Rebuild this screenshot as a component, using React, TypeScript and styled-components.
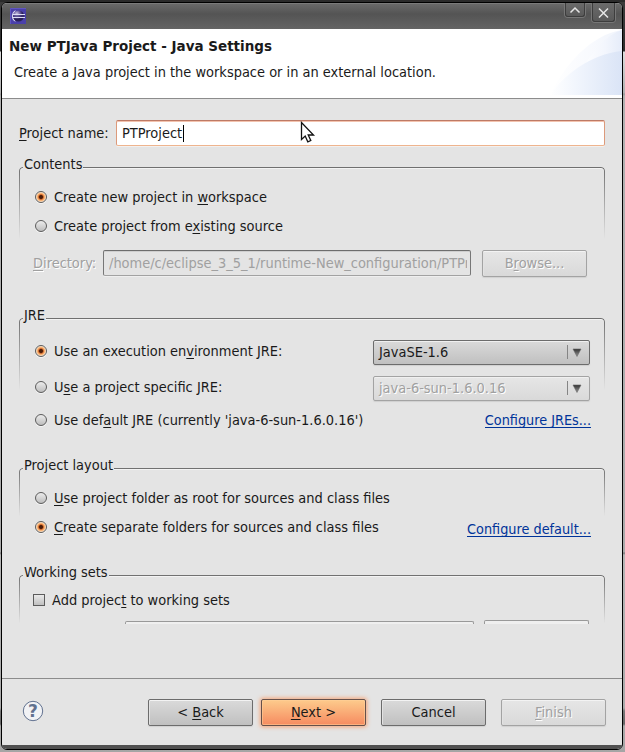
import React from "react";
import styled, { createGlobalStyle, css } from "styled-components";

const FACE = "#e4e4e4";

const GlobalStyle = createGlobalStyle`
  * { box-sizing: border-box; }
  body {
    margin: 0;
    overflow: hidden;
    font-family: "DejaVu Sans Condensed", "DejaVu Sans", sans-serif;
    font-stretch: condensed;
    font-size: 14.45px;
    line-height: 20px;
    color: #1a1a1a;
    white-space: nowrap;
  }
`;

const Desktop = styled.div`
  width: 625px;
  height: 752px;
  padding: 2px 2px 2px 1px;
  background: linear-gradient(#2b2b2b 0 2px, #3c3c3c 2px, #2e2e2e 51px, #dcdcdc 52px, #b0b0b0 93px, #999 94px, #b1b1b1 96px, #aaa 552px, #777 553px, #b5b5b5 555px, #aaa 708px, #777 711px, #666 724px, #aaa 726px, #a5a5a5);
`;

const Window = styled.div`
  display: flex;
  flex-direction: column;
  width: 622px;
  height: 748px;
  border: 1px solid #000;
  border-radius: 6px;
  background: ${FACE};
  overflow: hidden;
`;

const TitleBar = styled.div`
  display: flex;
  flex: none;
  height: 26px;
  padding: 0 7px 0 8px;
  background: linear-gradient(#7b7b7b 0 1px, #696969 1px, #545454 11px, #646464);
`;

const AppIcon = styled.svg`
  width: 16px;
  height: 16px;
  margin: 5px auto 0 0;
`;

const WindowButton = styled.div<{ $w: number; $h: number }>`
  width: ${(p) => p.$w}px;
  height: ${(p) => p.$h}px;
  margin-left: 7px;
  border: 1px solid #3d3d3d;
  border-top: 0;
  border-radius: 0 0 3px 3px;
  box-shadow: 0 0 0 1px #777;
  background: linear-gradient(#6b6b6b, #595959);
  svg { display: block; }
`;

const Banner = styled.header`
  display: flex;
  flex: none;
  justify-content: space-between;
  height: 70px;
  border-bottom: 1px solid #8c8c8c;
  background: #fff;
`;

const BannerText = styled.div`
  padding: 7px 0 0 7px;
`;

const Title = styled.h1`
  margin: 0;
  font-family: "DejaVu Sans", sans-serif;
  font-stretch: normal;
  font-size: 13.5px;
  line-height: 20px;
  font-weight: bold;
`;

const Subtitle = styled.p`
  margin: 6px 0 0 5px;
`;

const Form = styled.main`
  flex: none;
  height: 579px;
  padding: 21px 17px 0;
`;

const Row = styled.div<{ $top?: number; $left?: number; $h?: number }>`
  display: flex;
  align-items: center;
  height: ${(p) => p.$h ?? 20}px;
  margin-top: ${(p) => p.$top ?? 0}px;
  padding-left: ${(p) => p.$left ?? 0}px;
`;

const Key = styled.span`
  text-decoration: underline 1px;
  text-underline-offset: 2px;
  text-decoration-skip-ink: none;
`;

const Label = styled.label<{ $w?: number; $disabled?: boolean }>`
  width: ${(p) => (p.$w ? `${p.$w}px` : "auto")};
  height: 20px;
  ${(p) => p.$disabled && css`color: #a0a0a0; text-shadow: 1px 1px 0 #fff;`}
`;

const Field = styled.div<{ $w: number; $disabled?: boolean }>`
  width: ${(p) => p.$w}px;
  height: 26px;
  padding: 2px 3px 2px 5px;
  border: 1px solid;
  border-radius: 2px;
  ${(p) =>
    p.$disabled
      ? css`
          border-color: #6e6e6e #777 #a2a2a2 #777;
          color: #a0a0a0;
          background: ${FACE};
          box-shadow: inset 0 1px 0 #cfcfcf, 0 1px 0 #efefef;
        `
      : css`
          border-color: #bd7a66 #dc9a7b #eeb48e #dc9a7b;
          background: #fff;
          box-shadow: inset 0 1px 0 #f3c3ae, 0 1px 0 #f3f0ee;
        `}
`;

const Clip = styled.div`
  overflow: hidden;
  height: 20px;
`;

const Caret = styled.span`
  display: inline-block;
  width: 1px;
  height: 17px;
  margin: 2px 0 0 1px;
  background: #000;
  vertical-align: top;
`;

const Group = styled.section<{ $h: number; $fade: number }>`
  position: relative;
  height: ${(p) => p.$h}px;
  &::before {
    content: "";
    position: absolute;
    inset: 0 0 auto;
    height: ${(p) => p.$fade}px;
    border: 1px solid #6f6f6f;
    border-bottom: 0;
    border-radius: 4px 4px 0 0;
    box-shadow: inset 0 1px 0 #f3f3f3;
    mask-image: linear-gradient(#000, transparent);
    pointer-events: none;
  }
`;

const Legend = styled.div`
  position: relative;
  width: fit-content;
  height: 20px;
  margin: 0 0 -13px 4px;
  padding: 0 1px;
  top: -13px;
  background: ${FACE};
`;

const Radio = styled.span<{ $on?: boolean }>`
  width: 12px;
  height: 12px;
  margin: 0 7px 0 16px;
  border: 1px solid #5c5c5c;
  border-radius: 50%;
  box-shadow: 0 1px 0 #f5f5f5;
  background: ${(p) =>
    p.$on
      ? "radial-gradient(circle at 50% 50%, #4b1c08 0 1.5px, #c8622c 2.4px, #f9a860 3.2px, #fbc796 4.2px, #fdf0e4 5px)"
      : "linear-gradient(#ececec, #bdbdbd)"};
`;

const Checkbox = styled.span`
  width: 12px;
  height: 12px;
  margin: 0 7px 0 14px;
  border: 1px solid #5c5c5c;
  background: linear-gradient(#eaeaea, #c0c0c0);
`;

const Button = styled.button<{ $kind?: "primary" | "disabled"; $gap?: number }>`
  flex: none;
  width: 105px;
  height: 27px;
  margin: 1px 0 0 ${(p) => p.$gap ?? 15}px;
  padding: 0 0 1px;
  border: 1px solid #6c6c6c;
  border-radius: 2px;
  font: inherit;
  color: #1a1a1a;
  background: linear-gradient(#dadada, #c0c0c0);
  box-shadow: inset 0 1px 0 #f3f3f3, inset 1px 0 0 #e2e2e2, 0 1px 1px #d0d0d0;
  ${(p) =>
    p.$kind === "primary" &&
    css`
      border-color: #65504a;
      background: linear-gradient(#fdcb8c, #f68b60);
      box-shadow: inset 0 0 0 1px #ffd09a88, 0 0 4px 1px #f6a476;
    `}
  ${(p) =>
    p.$kind === "disabled" &&
    css`
      border-color: #a3a3a3;
      color: #a0a0a0;
      text-shadow: 1px 1px 0 #fff;
      background: linear-gradient(#e6e6e6, #d9d9d9);
    `}
`;

const Select = styled.div<{ $disabled?: boolean }>`
  display: flex;
  align-items: center;
  justify-content: space-between;
  width: 217px;
  height: 25px;
  margin: 2px 15px 0 auto;
  padding: 0 7px 0 5px;
  border: 1px solid #6c6c6c;
  border-radius: 2px;
  background: linear-gradient(#dadada, #c0c0c0);
  box-shadow: inset 0 1px 0 #f0f0f0, 0 1px 1px #cfcfcf;
  ${(p) =>
    p.$disabled &&
    css`
      border-color: #a3a3a3;
      color: #a0a0a0;
      text-shadow: 1px 1px 0 #fff;
      background: linear-gradient(#e6e6e6, #d9d9d9);
    `}
`;

const Link = styled.a<{ $raise?: number }>`
  height: 18px;
  margin: 1px 14px ${(p) => p.$raise ?? 0}px auto;
  line-height: 20px;
  font-size: 14.3px;
  color: #003399;
  border-bottom: 1px solid #003399;
`;

const ClippedRow = styled.div`
  display: flex;
  align-items: flex-end;
  height: 4px;
  margin-top: 10px;
  padding-left: 106px;
`;

const ClippedControl = styled.div<{ $w: number; $h: number }>`
  width: ${(p) => p.$w}px;
  height: ${(p) => p.$h}px;
  margin-right: 10px;
  border: 1px solid #999;
  border-bottom: 0;
  border-radius: 2px 2px 0 0;
  background: #efefef;
`;

const Footer = styled.footer`
  display: flex;
  flex: none;
  align-items: center;
  height: 67px;
  padding: 0 16px 0 20px;
  border-top: 1px solid #8c8c8c;
`;

const HelpIcon = styled.svg`
  width: 22px;
  height: 22px;
  margin: -2px auto 0 0;
`;

const HelpMark = styled.text`
  font: bold 17px "DejaVu Sans", sans-serif;
  fill: #61718f;
`;

const BottomEdge = styled.div`
  flex: 1;
  background: #505050;
`;

const Pointer = styled.svg`
  position: absolute;
  left: 300px;
  top: 121px;
  width: 16px;
  height: 23px;
`;

const DropMark = () => (
  <svg width="15" height="14">
    <defs>
      <linearGradient id="mark" x2="0" y2="1">
        <stop stopColor="#333" />
        <stop offset="1" stopColor="#999" />
      </linearGradient>
    </defs>
    <path d="M.5 0v14" stroke="#858585" />
    <path d="M6 4h8L10 11.500z" fill="url(#mark)" stroke="#666" strokeWidth=".6" />
  </svg>
);

export default function App() {
  return (
    <Desktop>
      <GlobalStyle />
      <Window>
        <TitleBar>
          <AppIcon viewBox="0 0 16 16">
            <defs>
              <radialGradient id="globe" cx=".35" cy=".3">
                <stop stopColor="#c9c4e2" />
                <stop offset=".6" stopColor="#675a9f" />
                <stop offset="1" stopColor="#282057" />
              </radialGradient>
            </defs>
            <path d="M0 0h16v16H0z" fill="#4a40aa" />
            <path d="M.5 16V.5H16" fill="none" stroke="#6055c0" />
            <path d="M6 2.2C.5 3.5.5 12.500 6 13.800C3.500 11 3.500 5 6 2.200" fill="#d9d8ee" />
            <circle cx="8.500" cy="8" r="5.600" fill="url(#globe)" />
            <path d="M3 6.500h12M3 9.500h12" stroke="#ddddf5" />
            <path d="M3 8h12" stroke="#40377d" />
          </AppIcon>
          <WindowButton $w={20} $h={14}>
            <svg width="18" height="13"><path d="M4.500 9.500L9 5l4.500 4.500" fill="none" stroke="#e6e6e6" strokeWidth="1.500" /></svg>
          </WindowButton>
          <WindowButton $w={23} $h={19}>
            <svg width="21" height="18"><path d="M6 5.500l9 9M15 5.500l-9 9" stroke="#e6e6e6" strokeWidth="1.500" /></svg>
          </WindowButton>
        </TitleBar>
        <Banner>
          <BannerText>
            <Title>New PTJava Project - Java Settings</Title>
            <Subtitle>Create a Java project in the workspace or in an external location.</Subtitle>
          </BannerText>
          <svg width="72" height="66">
            <defs>
              <linearGradient id="sweep">
                <stop stopColor="#fff" />
                <stop offset=".35" stopColor="#f2f6fd" />
                <stop offset="1" stopColor="#dae4f6" />
              </linearGradient>
              <linearGradient id="haze">
                <stop stopColor="#fff" />
                <stop offset=".6" stopColor="#f3f6fd" />
                <stop offset="1" stopColor="#e5ecf9" />
              </linearGradient>
            </defs>
            <path d="M0 66C14 37 40 6 72 1v65z" fill="url(#haze)" opacity=".6" />
            <path d="M30 44C43 20 58 5 72 1v43z" fill="url(#haze)" />
            <path d="M0 66C13 47 40 25 72 22v44z" fill="url(#sweep)" />
          </svg>
        </Banner>
        <Form>
          <Row $h={26}>
            <Label $w={97}><Key>P</Key>roject name:</Label>
            <Field $w={489}>PTProject<Caret /></Field>
          </Row>
          <Row $h={21} />
          <Group $h={151} $fade={71}>
            <Legend>Contents</Legend>
            <Row $top={13}><Radio $on /><Label>Create new project in <Key>w</Key>orkspace</Label></Row>
            <Row $top={9}><Radio /><Label>Create project from e<Key>x</Key>isting source</Label></Row>
            <Row $top={14} $left={14} $h={26}>
              <Label $w={70} $disabled><Key>D</Key>irectory:</Label>
              <Field $w={368} $disabled><Clip>/home/c/eclipse_3_5_1/runtime-New_configuration/PTProject</Clip></Field>
              <Button $kind="disabled" $gap={11}>B<Key>r</Key>owse...</Button>
            </Row>
          </Group>
          <Group $h={150} $fade={71}>
            <Legend>JRE</Legend>
            <Row $top={16}>
              <Radio $on /><Label>Use an execution en<Key>v</Key>ironment JRE:</Label>
              <Select>JavaSE-1.6<DropMark /></Select>
            </Row>
            <Row $top={16}>
              <Radio /><Label>U<Key>s</Key>e a project specific JRE:</Label>
              <Select $disabled>java-6-sun-1.6.0.16<DropMark /></Select>
            </Row>
            <Row $top={13}>
              <Radio /><Label>Use def<Key>a</Key>ult JRE (currently 'java-6-sun-1.6.0.16')</Label>
              <Link $raise={4}>Configure JREs...</Link>
            </Row>
          </Group>
          <Group $h={107} $fade={47}>
            <Legend>Project layout</Legend>
            <Row $top={13}><Radio /><Label><Key>U</Key>se project folder as root for sources and class files</Label></Row>
            <Row $top={9}>
              <Radio $on /><Label><Key>C</Key>reate separate folders for sources and class files</Label>
              <Link>Configure default...</Link>
            </Row>
          </Group>
          <Group $h={49} $fade={47}>
            <Legend>Working sets</Legend>
            <Row $top={8}><Checkbox /><Label>Add projec<Key>t</Key> to working sets</Label></Row>
            <ClippedRow><ClippedControl $w={349} $h={3} /><ClippedControl $w={105} $h={4} /></ClippedRow>
          </Group>
        </Form>
        <Footer>
          <HelpIcon viewBox="0 0 22 22">
            <circle cx="11" cy="11" r="9.700" fill="#f1f2f5" stroke="#61718f" />
            <HelpMark x="11" y="17" textAnchor="middle">?</HelpMark>
          </HelpIcon>
          <Button>&lt; <Key>B</Key>ack</Button>
          <Button $kind="primary" $gap={8}><Key>N</Key>ext &gt;</Button>
          <Button>Cancel</Button>
          <Button $kind="disabled"><Key>F</Key>inish</Button>
        </Footer>
        <BottomEdge />
      </Window>
      <Pointer viewBox="0 0 16 23">
        <path d="M1.500 1.500v17l3.700-3.500 2.600 5.800 3-1.300-2.600-5.500h5.300z" fill="#fff" stroke="#111" strokeWidth="1.300" />
      </Pointer>
    </Desktop>
  );
}
